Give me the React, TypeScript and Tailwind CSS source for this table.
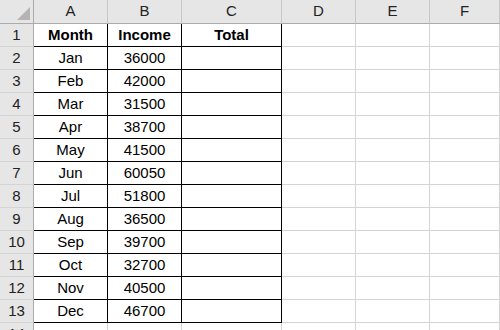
const cols = ['A', 'B', 'C', 'D', 'E', 'F'];

const data: [string, string][] = [
  ['Jan', '36000'],
  ['Feb', '42000'],
  ['Mar', '31500'],
  ['Apr', '38700'],
  ['May', '41500'],
  ['Jun', '60050'],
  ['Jul', '51800'],
  ['Aug', '36500'],
  ['Sep', '39700'],
  ['Oct', '32700'],
  ['Nov', '40500'],
  ['Dec', '46700'],
];

const grid = 'grid grid-cols-[34px_74px_74px_100px_74px_74px_1fr]';

function RowHead({ n }: { n: number }) {
  return (
    <div className="h-[23px] bg-[#e6e6e6] border-r border-b border-r-[#ababab] border-b-[#d4d4d4] flex items-center justify-center text-[#222]">
      {n}
    </div>
  );
}

function Cell({ children, bold, boxed }: { children?: React.ReactNode; bold?: boolean; boxed?: boolean }) {
  return (
    <div
      className={
        'h-[23px] border-r border-b flex items-center justify-center text-black ' +
        (boxed ? 'border-black ' : 'border-[#d4d4d4] ') +
        (bold ? 'font-bold' : '')
      }
    >
      {children}
    </div>
  );
}

export default function App() {
  const rows: React.ReactNode[] = [];
  rows.push(
    <div key="r1" className={grid}>
      <RowHead n={1} />
      <Cell boxed bold>Month</Cell>
      <Cell boxed bold>Income</Cell>
      <Cell boxed bold>Total</Cell>
      <Cell />
      <Cell />
      <Cell />
    </div>
  );
  data.forEach(([m, v], i) => {
    rows.push(
      <div key={m} className={grid}>
        <RowHead n={i + 2} />
        <Cell boxed>{m}</Cell>
        <Cell boxed>{v}</Cell>
        <Cell boxed />
        <Cell />
        <Cell />
        <Cell />
      </div>
    );
  });
  rows.push(
    <div key="r14" className={grid}>
      <RowHead n={14} />
      <Cell />
      <Cell />
      <Cell />
      <Cell />
      <Cell />
      <Cell />
    </div>
  );

  return (
    <div className="w-[500px] h-[330px] overflow-hidden bg-white text-[15px] font-['Liberation_Sans',Arial,sans-serif]">
      {/* column headers */}
      <div className={grid}>
        <div className="relative h-[24px] bg-[#e6e6e6] border-r border-b border-r-[#ababab] border-b-[#ababab]">
          <div className="absolute right-[3px] bottom-[3px] w-0 h-0 border-l-[13px] border-l-transparent border-b-[13px] border-b-[#b4b4b4]" />
        </div>
        {cols.map((c) => (
          <div
            key={c}
            className="h-[24px] bg-[#e6e6e6] border-r border-b border-r-[#c8c8c8] border-b-[#ababab] flex items-center justify-center text-[#222]"
          >
            {c}
          </div>
        ))}
      </div>
      {rows}
    </div>
  );
}
